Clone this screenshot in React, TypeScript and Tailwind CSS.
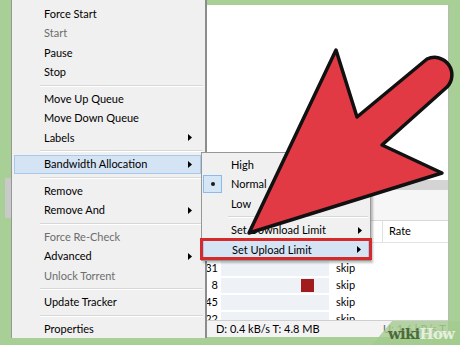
type Item = { t?: string; dis?: boolean; sub?: boolean; hl?: boolean; sep?: boolean };

const mainItems: Item[] = [
  { t: "Force Start" },
  { t: "Start", dis: true },
  { t: "Pause" },
  { t: "Stop" },
  { sep: true },
  { t: "Move Up Queue" },
  { t: "Move Down Queue" },
  { t: "Labels", sub: true },
  { sep: true },
  { t: "Bandwidth Allocation", sub: true, hl: true },
  { sep: true },
  { t: "Remove" },
  { t: "Remove And", sub: true },
  { sep: true },
  { t: "Force Re-Check", dis: true },
  { t: "Advanced", sub: true },
  { t: "Unlock Torrent", dis: true },
  { sep: true },
  { t: "Update Tracker" },
  { sep: true },
  { t: "Properties" },
];

const rows = [
  { n: "", red: false },
  { n: "31", red: false },
  { n: "8", red: true },
  { n: "45", red: false },
  { n: "22", red: false },
];

const SubArrow = () => (
  <svg width="4" height="7" viewBox="0 0 4 7" className="shrink-0">
    <path d="M0 0 L4 3.5 L0 7 Z" fill="#000" />
  </svg>
);

const Separator = ({ left }: { left: number }) => (
  <div className="h-[7px] flex flex-col justify-center" style={{ paddingLeft: left }}>
    <div className="h-px bg-[#d7d7d7] mr-[2px]" />
    <div className="h-px bg-white mr-[2px]" />
  </div>
);

const MainMenu = () => (
  <div className="absolute left-[11px] top-0 w-[196px] h-[338px] bg-[#f0f0f0] border-l border-[#979797] border-r-2 border-r-[#8c8c8c] pt-[4px]">
    {mainItems.map((it, i) =>
      it.sep ? (
        <Separator key={i} left={28} />
      ) : (
        <div
          key={i}
          className={
            "h-[19.5px] flex items-center pl-[29px] pr-[8px] text-[11px] " +
            (it.hl ? "ml-[2px] mr-[4px] bg-[#d5e4f4] border border-[#a9c9ec]" : "ml-[2px] mr-[4px] border border-transparent") +
            (it.dis ? " text-[#6d6d6d]" : " text-black")
          }
        >
          <span className="flex-1">{it.t}</span>
          {it.sub && <SubArrow />}
        </div>
      )
    )}
  </div>
);

const SubMenu = () => (
  <div className="absolute left-[201px] top-[152px] w-[170px] h-[109px] bg-[#f0f0f0] border border-[#979797] pt-[2px] shadow-[2px_2px_2px_rgba(0,0,0,0.25)]">
    {["High", "Normal", "Low"].map((t) => (
      <div key={t} className="h-[19.5px] flex items-center text-[11px] text-black relative">
        {t === "Normal" && (
          <div className="absolute left-[1px] top-[0.5px] w-[19px] h-[18px] bg-[#d5e6f6] border border-[#8fb9e6] flex items-center justify-center">
            <div className="w-[4px] h-[4px] rounded-full bg-[#1a1a1a]" />
          </div>
        )}
        <span className="pl-[29px]">{t}</span>
      </div>
    ))}
    <Separator left={26} />
    <div className="h-[19.5px] flex items-center pl-[29px] pr-[8px] text-[11px] text-black">
      <span className="flex-1">Set Download Limit</span>
      <SubArrow />
    </div>
    <div className="h-[19.5px] flex items-center pl-[28px] pr-[7px] mx-[1px] text-[11px] text-black bg-[#d5e4f4] border border-[#a9c9ec]">
      <span className="flex-1">Set Upload Limit</span>
      <SubArrow />
    </div>
  </div>
);

const BigArrow = () => (
  <svg width="460" height="345" viewBox="0 0 460 345" className="absolute left-0 top-0 pointer-events-none">
    <path
      d="M249 233 L336 50 L357 117 L427 59 A17.5 17.5 0 0 1 447 87 L382 145 L442 173 Z"
      fill="#e23a45"
      stroke="#111"
      strokeWidth="3.5"
      strokeLinejoin="round"
    />
  </svg>
);

const Watermark = () => (
  <div className="absolute left-[372px] bottom-0 w-[88px] h-[24px]">
    <svg width="88" height="24" viewBox="0 0 88 24" className="absolute left-0 top-0">
      <polygon points="0,24 20,0 88,0 88,24" fill="#a4cb8f" opacity="0.8" />
    </svg>
    <div className="absolute left-[16px] top-[5px] text-[15px] leading-[17px] font-bold font-['DejaVu_Serif',serif] tracking-[-0.8px]">
      <span className="text-[#4d6a3c]">wiki</span>
      <span className="text-[#e4f0dc]">How</span>
    </div>
  </div>
);

export default function App() {
  return (
    <div className="w-[460px] h-[345px] bg-[#a8cf95] pt-[5px] pl-[11px] pr-[11px] relative overflow-hidden font-['Lato',sans-serif]">
      <div className="h-[332px] bg-white flex flex-col overflow-hidden border-r border-[#b9b9b9]">
        <div className="h-[175px] bg-white shrink-0" />
        <div className="h-[10px] bg-[#d4d4d4] shrink-0" />
        <div className="h-[31px] bg-[#f6f6f6] border-b border-[#d9d9d9] shrink-0" />
        <div className="h-[22px] flex border-b border-[#e3e3e3] text-[11px] text-black shrink-0">
          <div className="w-[318px]" />
          <div className="w-[54px] border-r border-[#e0e0e0]" />
          <div className="flex items-center pl-[6px]">Rate</div>
        </div>
        <div className="flex-1 min-h-0 overflow-hidden flex flex-col">
          {rows.map((r, i) => (
            <div key={i} className="h-[17px] flex items-center text-[11px] text-black shrink-0">
              <div className="w-[207px] text-right">{r.n}</div>
              <div className="w-[108px] h-[15px] ml-[3px] bg-[#eef1f6] relative">
                {r.red && <div className="absolute left-[80px] top-[1px] w-[13px] h-[13px] bg-[#a11c1c]" />}
              </div>
              <div className="pl-[7px]">skip</div>
            </div>
          ))}
        </div>
        <div className="h-[17px] bg-[#f3f3f3] border-t border-[#cfcfcf] flex items-center text-[11px] text-black shrink-0 whitespace-nowrap overflow-hidden">
          <div className="pl-[205px] w-[372px] shrink-0">D: 0.4 kB/s T: 4.8 MB</div>
          <div className="text-[#666] shrink-0">U: 1.6 kB/s T</div>
        </div>
      </div>
      <div className="absolute left-[5px] top-[178px] w-[6px] h-[40px] bg-[#c9c9c9]" />
      <MainMenu />
      <SubMenu />
      <div className="absolute left-[200px] top-[238px] w-[172px] h-[22px] border-[3px] border-[#d42a2a]" />
      <BigArrow />
      <Watermark />
    </div>
  );
}
